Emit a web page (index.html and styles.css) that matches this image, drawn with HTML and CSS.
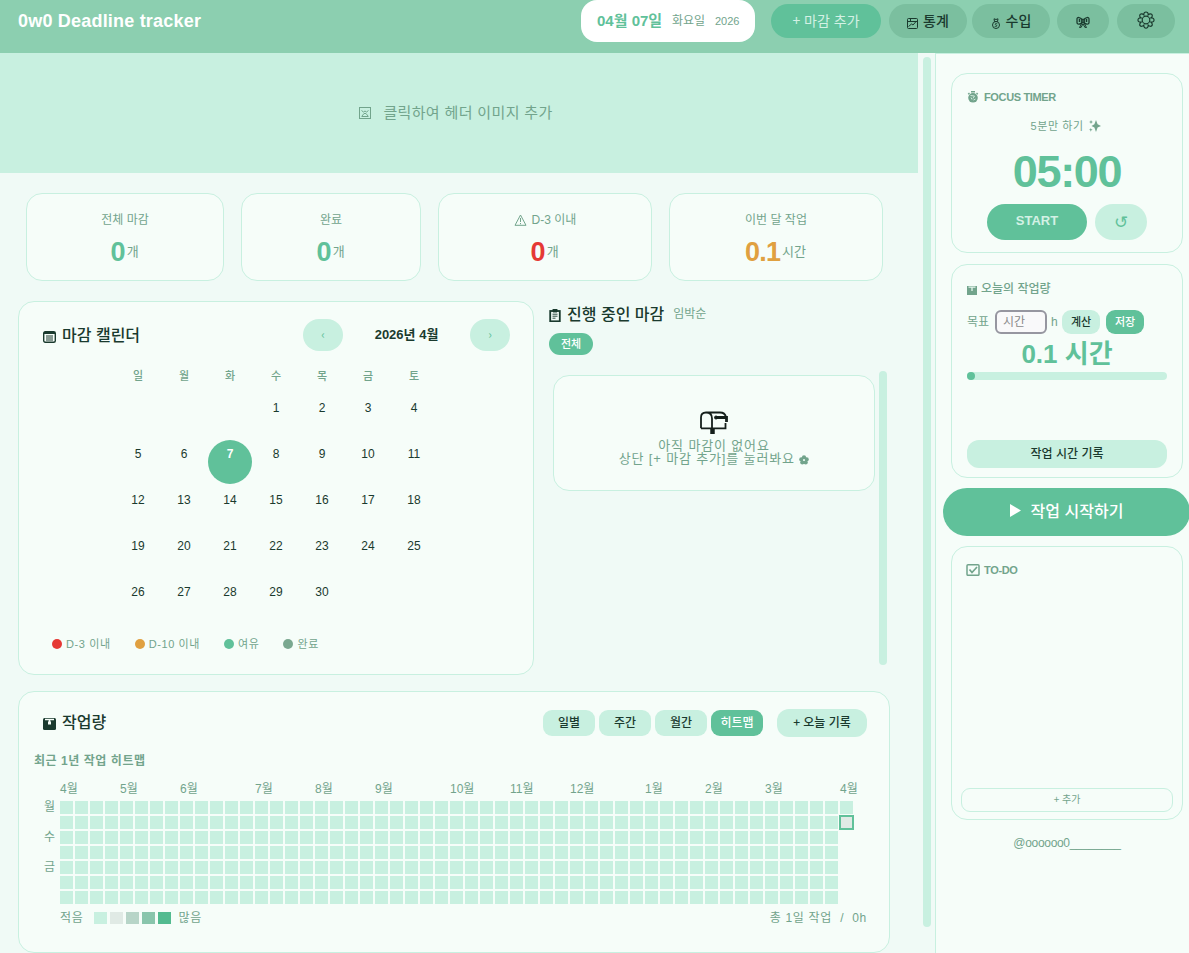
FILE: index.html
```html
<!DOCTYPE html>
<html lang="ko">
<head>
  <meta charset="UTF-8">
  <meta name="viewport" content="width=device-width, initial-scale=1.0">
  <title>0w0 Deadline tracker</title>
  <link rel="stylesheet" href="styles.css">
</head>
<body>
  <header class="topbar">
    <h1>0w0 Deadline tracker</h1>
    <div class="date-pill"><b>04월 07일</b><span class="weekday">화요일</span><span class="year">2026</span></div>
    <button class="top-btn add">+ 마감 추가</button>
    <button class="top-btn stats-btn">
      <svg width="11" height="11" viewBox="0 0 11 11" fill="none" stroke="currentColor"><rect x=".5" y=".5" width="10" height="10" rx="1"/><path d="M.5 3.500h10M3.500.5v3M1.500 8.500l3-2.500 1.500 1L9.500 3" /></svg>
      <span>통계</span>
    </button>
    <button class="top-btn income-btn">
      <svg width="10" height="11" viewBox="0 0 10 11" fill="none" stroke="currentColor"><path d="M3.500 3.500h3L7 .8 5 1.500 3 .8z"/><circle cx="5" cy="7" r="3.500"/><path d="M6.300 5.800c-2-1-3 .7-1.300 1.200S6.300 8.700 3.700 8.400" stroke-width=".9"/></svg>
      <span>수입</span>
    </button>
    <button class="top-btn ribbon-btn">
      <svg width="14" height="13" viewBox="0 0 14 13" fill="none" stroke="currentColor"><path d="M6 3.500C4.500 1.500 1 .5 1 3v3.500C1 9 4.500 8.500 6 6.500zM8 3.500c1.500-2 5-3 5-.5v3.500C13 9 9.500 8.500 8 6.500z" stroke-width="1.300"/><path d="M3.500 3v3M10.500 3v3" stroke-width="1.500"/><rect x="5.800" y="3.300" width="2.400" height="3.400"/><path d="M6 7l-2.500 4.500 1.700-.2L6.800 8M8 7l2.500 4.500-1.700-.2L7.200 8"/></svg>
    </button>
    <button class="top-btn gear-btn">
      <svg width="18" height="18" viewBox="0 0 18 18" fill="none" stroke="currentColor" stroke-width="1.200"><circle cx="9" cy="9" r="3.800"/><path d="M6.800 3.900C6.500 0 11.500 0 11.200 3.900 14 1.100 17 4.500 14.100 6.800 18 6.500 18 11.500 14.100 11.200 17 14 14 17 11.200 14.100 11.500 18 6.500 18 6.800 14.100 4 17 1 14 3.900 11.200 0 11.500 0 6.500 3.900 6.800 1 4.500 4 1.100 6.800 3.900z"/></svg>
    </button>
  </header>

  <div class="layout">
    <main class="main">
      <div class="banner">
        <svg width="12" height="12" viewBox="0 0 12 12" fill="none" stroke="currentColor"><rect x=".5" y=".5" width="11" height="11"/><path d="M2.500 3.500l2 1.500L6 4l1.500 1 2-1.500M3 9l2-2.500h2L9 9M2.500 9.500h7" /></svg>
        <span>클릭하여 헤더 이미지 추가</span>
      </div>

      <section class="stats">
        <div class="card stat">
          <div class="stat-label">전체 마감</div>
          <div class="stat-value"><b>0</b>개</div>
        </div>
        <div class="card stat">
          <div class="stat-label">완료</div>
          <div class="stat-value"><b>0</b>개</div>
        </div>
        <div class="card stat">
          <div class="stat-label">
            <svg width="13" height="12" viewBox="0 0 13 12" fill="none" stroke="currentColor"><path d="M6.500 1L12 11.300H1zM6.500 4v4M6.500 9v1.200"/></svg>
            D-3 이내
          </div>
          <div class="stat-value red"><b>0</b>개</div>
        </div>
        <div class="card stat">
          <div class="stat-label">이번 달 작업</div>
          <div class="stat-value amber"><b>0.1</b>시간</div>
        </div>
      </section>

      <div class="middle">
        <section class="card calendar">
          <div class="cal-head">
            <h2>
              <svg width="13" height="12" viewBox="0 0 13 12"><rect x=".7" y=".7" width="11.600" height="10.600" rx="1.500" fill="none" stroke="currentColor" stroke-width="1.400"/><path d="M1 2h11" stroke="currentColor" stroke-width="2"/><path d="M3 5h7M3 7h7M3 9h7" stroke="currentColor" stroke-width="1.100"/></svg>
              마감 캘린더
            </h2>
            <button class="nav">‹</button>
            <div class="month">2026년 4월</div>
            <button class="nav">›</button>
          </div>
          <div class="weekdays"><span>일</span><span>월</span><span>화</span><span>수</span><span>목</span><span>금</span><span>토</span></div>
          <div class="days" id="days"></div>
          <div class="legend">
            <span><i class="dot red"></i>D-3 이내</span>
            <span><i class="dot amber"></i>D-10 이내</span>
            <span><i class="dot green"></i>여유</span>
            <span><i class="dot done"></i>완료</span>
          </div>
        </section>

        <section class="deadlines">
          <div class="dl-head">
            <h2>
              <svg width="12" height="13" viewBox="0 0 12 13"><rect x="1.200" y="2" width="9.600" height="10.300" fill="none" stroke="currentColor" stroke-width="1.800"/><path d="M4 0h4v3H4zM3.500 5.200h5M3.500 7.200h5M3.500 9.200h3" fill="currentColor" stroke="currentColor" stroke-width=".9"/></svg>
              진행 중인 마감
            </h2>
            <span class="sort">임박순</span>
          </div>
          <button class="filter">전체</button>
          <div class="dl-list">
            <div class="card empty">
              <svg width="30" height="24" viewBox="0 0 30 24" fill="none" stroke="#151f1b" stroke-width="1.800"><path d="M2 17.300V6.500Q2 1.500 7 1.500h14Q26 1.500 27 6M2 17.300h24.500V12M7 1.500q6 0 6 6v9.800"/><path d="M17 6.500h10.500V11" stroke-width="2.800"/><circle cx="17" cy="6.500" r="1.500" fill="#151f1b" stroke-width="1"/><path d="M13.500 17v6" stroke-width="4.500"/></svg>
              <p>아직 마감이 없어요</p>
              <p class="hint">상단 [+ 마감 추가]를 눌러봐요
                <svg width="10" height="10" viewBox="0 0 10 10" fill="currentColor"><circle cx="5" cy="2.300" r="2.100"/><circle cx="2.300" cy="4.400" r="2.100"/><circle cx="7.700" cy="4.400" r="2.100"/><circle cx="3.300" cy="7.500" r="2.100"/><circle cx="6.700" cy="7.500" r="2.100"/><circle cx="5" cy="5" r="1" fill="#d9f0e5"/></svg>
              </p>
            </div>
            <div class="scrollbar"></div>
          </div>
        </section>
      </div>

      <section class="card workload">
        <div class="work-head">
          <h2>
            <svg width="13" height="12" viewBox="0 0 13 12"><rect width="13" height="12" rx="1.500" fill="currentColor"/><path d="M2 1.500h9M6.500 2v4" stroke="#f6fdf9" stroke-width="1.600"/><path d="M5 3.500h3v3H5z" fill="#f6fdf9"/></svg>
            작업량
          </h2>
          <button class="tab">일별</button>
          <button class="tab">주간</button>
          <button class="tab">월간</button>
          <button class="tab active">히트맵</button>
          <button class="tab record">+ 오늘 기록</button>
        </div>
        <h3>최근 1년 작업 히트맵</h3>
        <div class="months" id="months"></div>
        <div class="heat">
          <div class="heat-days"><span>월</span><span>수</span><span>금</span></div>
          <div class="heat-grid" id="heat"></div>
        </div>
        <div class="heat-foot">
          <span>적음</span>
          <div class="levels"><i class="l0"></i><i class="l1"></i><i class="l2"></i><i class="l3"></i><i class="l4"></i></div>
          <span>많음</span>
          <span class="total">총 1일 작업 &nbsp;/&nbsp; 0h</span>
        </div>
      </section>
    </main>
    <div class="page-scroll"><div class="scrollbar"></div></div>

    <aside class="side">
      <section class="card timer">
        <h4>
          <svg width="12" height="12" viewBox="0 0 12 12"><circle cx="6" cy="6.800" r="4.800" fill="currentColor"/><path d="M4 .7h4M9.500 2l1.300 1.200M2.500 2L1.200 3.200" stroke="currentColor" stroke-width="1.400"/><path d="M3.500 4.500l4 .5M7.500 5L6 7.500M4 6.500l1 2M6.500 9l2-1" stroke="#d9f0e5" stroke-width=".9"/></svg>
          FOCUS TIMER
        </h4>
        <p class="mode">5분만 하기
          <svg width="12" height="12" viewBox="0 0 12 12" fill="currentColor"><path d="M7 0l1.600 4.200L12 6 8.600 7.600 7 12 5.400 7.600 2.500 6l2.900-1.800zM2 0l.7 1.500L4 2l-1.300.6L2 4l-.6-1.400L0 2l1.400-.5zM1.800 8l.5 1.300 1.400.5-1.400.5-.5 1.400-.5-1.400L0 9.800l1.300-.5z"/></svg>
        </p>
        <div class="clock">05:00</div>
        <div class="timer-btns">
          <button class="start">START</button>
          <button class="reset">↺</button>
        </div>
      </section>

      <section class="card today">
        <h4>
          <svg width="10" height="9" viewBox="0 0 10 9"><path d="M0 0h10v9H0z" fill="currentColor"/><path d="M1.500 1.200h7M5 1v4" stroke="#e6f6ee" stroke-width="1.300"/></svg>
          오늘의 작업량
        </h4>
        <div class="goal">
          <label>목표</label>
          <input type="text" placeholder="시간">
          <span class="unit">h</span>
          <button>계산</button>
          <button class="save">저장</button>
        </div>
        <div class="today-value">0.1 시간</div>
        <div class="bar"><div class="fill"></div></div>
        <button class="log">작업 시간 기록</button>
      </section>

      <button class="work-start">
        <svg width="11" height="13" viewBox="0 0 11 13" fill="currentColor"><path d="M0 0l11 6.500L0 13z"/></svg>
        작업 시작하기
      </button>

      <section class="card todo">
        <h4>
          <svg width="14" height="12" viewBox="0 0 14 12" fill="none" stroke="currentColor"><rect x="1" y=".8" width="12" height="10.500" rx="1" stroke-width="1.500"/><path d="M3.500 5.500l2.500 3 5-5.500" stroke-width="1.700"/></svg>
          TO-DO
        </h4>
        <button class="todo-add">+ 추가</button>
      </section>
      <p class="credit">@oooooo0________</p>
    </aside>
  </div>

  <script>
    // April 2026 starts on a Wednesday
    const days = document.getElementById('days');
    for (let i = 0; i < 3; i++) days.appendChild(document.createElement('span'));
    for (let d = 1; d <= 30; d++) {
      const el = document.createElement('span');
      el.textContent = d;
      if (d === 7) el.className = 'today-cell';
      days.appendChild(el);
    }

    const monthCols = [[4, 0], [5, 4], [6, 8], [7, 13], [8, 17], [9, 21], [10, 26], [11, 30], [12, 34], [1, 39], [2, 43], [3, 47], [4, 52]];
    const months = document.getElementById('months');
    monthCols.forEach(([m, col]) => {
      const el = document.createElement('span');
      el.textContent = m + '월';
      el.style.gridColumn = col + 1;
      months.appendChild(el);
    });

    // 52 full weeks plus monday and tuesday of this week
    const heat = document.getElementById('heat');
    const total = 52 * 7 + 2;
    for (let i = 0; i < total; i++) {
      const el = document.createElement('i');
      if (i === total - 1) el.className = 'now';
      heat.appendChild(el);
    }
  </script>
</body>
</html>
```

FILE: styles.css
```css
* {
  box-sizing: border-box;
  margin: 0;
  padding: 0;
}

body {
  height: 100vh;
  overflow: hidden;
  background: #f0faf6;
  color: #1a3a2e;
  font-family: "Liberation Sans", "Noto Sans CJK KR", sans-serif;
  font-size: 12px;
  line-height: 16px;
  white-space: nowrap;
}

button {
  border: none;
  padding-bottom: 2px;
  font-family: "Noto Sans CJK KR", sans-serif;
  font-weight: 500;
  line-height: 16px;
  white-space: nowrap;
  color: #1a3a2e;
  background: #c8f0e0;
}

svg {
  flex: none;
}

.card {
  background: #f6fdf9;
  border: 1px solid #c8f0e0;
  border-radius: 16px;
}

h2 {
  display: flex;
  align-items: center;
  gap: 6px;
  padding-bottom: 3px;
  font-family: "Noto Sans CJK KR", sans-serif;
  font-size: 16px;
  font-weight: 500;
  line-height: 20px;
}

h2 svg {
  position: relative;
  top: 3px;
}

/* top bar */
.topbar {
  display: flex;
  align-items: flex-start;
  height: 53px;
  padding: 4px 14px 0 18px;
  background: #8ccfb0;
}

.topbar h1 {
  margin-top: 6px;
  font-size: 18px;
  letter-spacing: .2px;
  line-height: 22px;
  color: #fff;
}

.date-pill {
  display: flex;
  align-items: center;
  width: 174px;
  height: 42px;
  margin: -4px 16px 0 auto;
  padding-left: 16px;
  border-radius: 16px;
  background: #fff;
  color: #72a48c;
}

.date-pill b {
  width: 75px;
  font-size: 15px;
  color: #60c19a;
}

.weekday {
  width: 43px;
}

.year {
  font-size: 11px;
}

.top-btn {
  display: flex;
  align-items: center;
  justify-content: center;
  gap: 5px;
  height: 34px;
  border-radius: 17px;
  background: #7bbf9f;
  font-size: 14px;
}

.top-btn.add {
  width: 110px;
  margin-right: 8px;
  background: #60c19a;
  color: #d4f1e5;
  font-weight: normal;
}

.stats-btn {
  width: 78px;
  margin-right: 5px;
}

.income-btn {
  width: 78px;
  margin-right: 7px;
}

.stats-btn svg,
.income-btn svg {
  position: relative;
  top: 3px;
}

.ribbon-btn {
  width: 52px;
  margin-right: 8px;
}

.ribbon-btn svg {
  position: relative;
  top: 2px;
}

.gear-btn {
  width: 58px;
}

/* main column */
.layout {
  display: flex;
  height: 900px;
}

.main {
  width: 918px;
}

.page-scroll {
  width: 17px;
  padding: 4px 4px 0 5px;
}

.scrollbar {
  width: 8px;
  border-radius: 4px;
  background: #c8f0e0;
}

.page-scroll .scrollbar {
  height: 870px;
}

.banner {
  display: flex;
  align-items: center;
  justify-content: center;
  gap: 12px;
  height: 120px;
  padding-right: 6px;
  background: #c8f0e0;
  color: #72a48c;
  font-size: 15px;
  letter-spacing: .35px;
}

.stats {
  display: grid;
  grid-template-columns: 198px 180px 214px 214px;
  gap: 17px;
  margin: 20px 0 20px 26px;
}

.stat {
  height: 88px;
  padding-top: 18px;
  text-align: center;
  color: #72a48c;
}

.stat-label {
  display: flex;
  justify-content: center;
  align-items: center;
  gap: 5px;
}

.stat-value {
  display: flex;
  align-items: center;
  justify-content: center;
  gap: 2px;
  height: 30px;
  margin-top: 9px;
  padding-right: 1px;
  font-size: 13px;
}

.stat-value b {
  font-size: 27px;
  letter-spacing: -.8px;
  color: #60c19a;
}

.stat-value.red b {
  color: #e53935;
}

.stat-value.amber b {
  color: #e0a040;
}

.middle {
  display: flex;
  gap: 15px;
  height: 374px;
  margin: 0 28px 16px 18px;
}

.calendar {
  width: 516px;
  padding: 17px 23px 0 24px;
}

.cal-head {
  display: flex;
  align-items: center;
  height: 32px;
}

.cal-head h2 {
  margin-right: auto;
}

.nav {
  width: 40px;
  height: 32px;
  border-radius: 16px;
  color: #60c19a;
  font-size: 12px;
  font-weight: normal;
}

.month {
  width: 127px;
  text-align: center;
  font-size: 13px;
  font-weight: bold;
}

.weekdays,
.days {
  display: grid;
  grid-template-columns: repeat(7, 44px);
  gap: 2px;
  padding-left: 73px;
  text-align: center;
}

.weekdays {
  margin-top: 16px;
  font-family: "Noto Sans CJK KR", sans-serif;
  font-size: 11px;
  font-weight: 500;
  color: #72a48c;
}

.days {
  margin-top: 11px;
}

.days span {
  height: 44px;
  padding-top: 6px;
  border-radius: 50%;
}

.today-cell {
  background: #60c19a;
  color: #fff;
  font-weight: bold;
}

.legend {
  display: flex;
  gap: 24px;
  margin: 14px 0 0 9px;
  font-size: 11px;
  letter-spacing: .6px;
  color: #72a48c;
}

.legend span {
  display: flex;
  align-items: center;
  gap: 4px;
}

.dot {
  width: 10px;
  height: 10px;
  border-radius: 50%;
}

.dot.red {
  background: #e53935;
}

.dot.amber {
  background: #e0a040;
}

.dot.green {
  background: #60c19a;
}

.dot.done {
  background: #7aa890;
}

.deadlines {
  width: 341px;
  padding-top: 3px;
}

.dl-head {
  display: flex;
  align-items: center;
  gap: 9px;
  height: 20px;
}

.sort {
  color: #72a48c;
}

.filter {
  display: block;
  width: 44px;
  height: 22px;
  margin-top: 9px;
  border-radius: 11px;
  background: #60c19a;
  color: #fff;
  font-size: 11px;
}

.dl-list {
  display: flex;
  gap: 4px;
  padding: 16px 0 0 4px;
}

.dl-list .scrollbar {
  height: 294px;
}

.empty {
  width: 322px;
  height: 116px;
  margin-top: 4px;
  padding-top: 35px;
  text-align: center;
  font-size: 13px;
  letter-spacing: .85px;
  line-height: 13px;
  color: #72a48c;
}

.empty > svg {
  display: block;
  margin: 0 auto 4px;
}

.hint svg {
  position: relative;
  top: 2px;
}

/* workload */
.workload {
  width: 872px;
  height: 262px;
  margin-left: 18px;
  padding: 16px 22px 0 15px;
  color: #72a48c;
}

.work-head {
  display: flex;
  align-items: center;
  gap: 4px;
  height: 29px;
}

.work-head h2 {
  margin: 0 auto 0 9px;
  color: #1a3a2e;
}

.tab {
  width: 52px;
  height: 26px;
  border-radius: 9px;
  font-size: 12px;
}

.tab.active {
  background: #60c19a;
  color: #fff;
}

.tab.record {
  width: 90px;
  height: 28px;
  margin-left: 10px;
  border-radius: 12px;
}

.workload h3 {
  margin-top: 16px;
  font-size: 12px;
  letter-spacing: .55px;
  line-height: 16px;
}

.months {
  display: grid;
  grid-template-columns: repeat(53, 13px);
  gap: 2px;
  height: 16px;
  margin: 12px 0 4px 26px;
}

.heat {
  display: flex;
}

.heat-days {
  width: 26px;
  padding-left: 10px;
}

.heat-days span {
  display: block;
  height: 30px;
  line-height: 13px;
}

.heat-grid {
  display: grid;
  grid-auto-flow: column;
  grid-template-rows: repeat(7, 13px);
  grid-auto-columns: 13px;
  gap: 2px;
}

.heat-grid i {
  background: #c8f0e0;
}

.heat-grid .now {
  margin: -1px;
  border: 2px solid #60c19a;
  background: #e0eae5;
}

.heat-foot {
  display: flex;
  align-items: center;
  margin: 6px 0 0 26px;
  letter-spacing: .7px;
}

.levels {
  display: flex;
  gap: 3px;
  margin: 0 7px 0 11px;
}

.levels i {
  width: 13px;
  height: 12px;
}

.l0 { background: #c8f0e0; }
.l1 { background: #e0eae5; }
.l2 { background: #b7d5c8; }
.l3 { background: #89c5ac; }
.l4 { background: #53bb90; }

.total {
  margin-left: auto;
}

/* sidebar */
.side {
  width: 254px;
  padding: 19px 0 0 15px;
  border-left: 1px solid #c8f0e0;
  border-top: 1px solid #c8f0e0;
  background: #f6fdf9;
  color: #72a48c;
}

.side .card {
  width: 232px;
  padding: 15px 15px 0;
}

.side h4 {
  display: flex;
  align-items: center;
  gap: 5px;
  font-size: 11px;
  letter-spacing: -.35px;
  line-height: 16px;
}

.timer {
  height: 180px;
  text-align: center;
}

.mode {
  margin-top: 13px;
  padding-right: 2px;
  font-size: 11px;
  letter-spacing: .6px;
}

.mode svg {
  vertical-align: -2px;
  margin-left: 2px;
}

.clock {
  height: 52px;
  margin-top: 12px;
  font-size: 45px;
  font-weight: bold;
  letter-spacing: -1.3px;
  line-height: 52px;
  color: #60c19a;
}

.timer-btns {
  display: flex;
  justify-content: center;
  gap: 8px;
  margin-top: 6px;
}

.start {
  width: 100px;
  height: 36px;
  border-radius: 18px;
  background: #60c19a;
  color: #d4f1e5;
  font-family: "Liberation Sans", sans-serif;
  font-size: 13px;
  font-weight: bold;
}

.reset {
  width: 52px;
  height: 36px;
  padding: 0;
  border-radius: 18px;
  color: #60c19a;
  font-family: "DejaVu Sans", sans-serif;
  font-size: 17px;
}

.today {
  height: 214px;
  margin-top: 11px;
}

.today h4 {
  gap: 4px;
  font-family: "Noto Sans CJK KR", sans-serif;
  font-size: 12px;
  font-weight: 500;
  letter-spacing: 0;
}

.today h4 svg {
  position: relative;
  top: 2px;
}

.goal {
  display: flex;
  align-items: center;
  height: 24px;
  margin-top: 14px;
}

.goal label {
  width: 28px;
}

.goal input {
  width: 52px;
  height: 24px;
  padding-left: 6px;
  border: 2px solid #9696a0;
  border-radius: 6px;
  background: #f9f9fa;
  font-family: inherit;
  font-size: 12px;
}

.goal input::placeholder {
  color: #8a8a8a;
}

.unit {
  width: 15px;
  padding-left: 4px;
}

.goal button {
  width: 38px;
  height: 24px;
  border-radius: 9px;
  font-size: 11px;
}

.goal .save {
  margin-left: 6px;
  background: #60c19a;
  color: #fff;
}

.today-value {
  height: 32px;
  margin-top: 4px;
  font-size: 26px;
  font-weight: bold;
  line-height: 33px;
  text-align: center;
  color: #60c19a;
}

.bar {
  height: 8px;
  margin-top: 2px;
  border-radius: 4px;
  background: #c8f0e0;
}

.fill {
  width: 8px;
  height: 8px;
  border-radius: 4px;
  background: #60c19a;
}

.log {
  display: block;
  width: 200px;
  height: 28px;
  margin-top: 60px;
  border-radius: 12px;
  font-size: 12px;
}

.work-start {
  display: flex;
  align-items: center;
  justify-content: center;
  gap: 10px;
  width: 247px;
  height: 48px;
  margin: 10px 0 10px -8px;
  padding-bottom: 5px;
  border-radius: 24px;
  background: #60c19a;
  color: #fff;
  font-size: 16px;
}

.work-start svg {
  position: relative;
  top: 1px;
}

.side .todo {
  display: flex;
  flex-direction: column;
  height: 274px;
  padding: 15px 9px 7px;
}

.todo h4 {
  gap: 4px;
  margin-left: 5px;
}

.todo-add {
  height: 24px;
  margin-top: auto;
  border: 1px solid #c8f0e0;
  border-radius: 9px;
  background: none;
  color: #72a48c;
  font-size: 10px;
  font-weight: normal;
}

.credit {
  width: 232px;
  margin-top: 15px;
  letter-spacing: -.3px;
  text-align: center;
}
```
